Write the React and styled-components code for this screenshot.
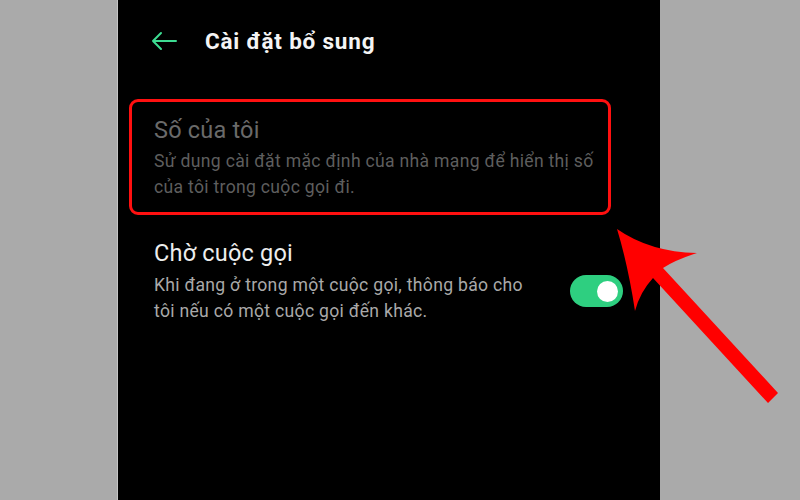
import React from "react";
import styled, { createGlobalStyle } from "styled-components";

const Global = createGlobalStyle`
  html, body { margin: 0; padding: 0; background: #aaaaaa; }
  body { font-family: Roboto, "Noto Sans", sans-serif; }
`;

const Page = styled.div`
  position: relative;
  width: 800px;
  height: 500px;
  display: flex;
  background: #aaaaaa;
  overflow: hidden;
`;

const Side = styled.div`
  width: ${(p) => p.$w}px;
  flex: ${(p) => (p.$grow ? 1 : "none")};
  background: #aaaaaa;
  border-right: ${(p) => (p.$edge ? "1px solid #c4c4c4" : "none")};
  box-sizing: border-box;
`;

const Screen = styled.div`
  width: 542px;
  height: 500px;
  background: #000;
  display: flex;
  flex-direction: column;
`;

const Header = styled.div`
  height: 82px;
  display: flex;
  align-items: center;
  padding-left: 33px;
  gap: 28px;
  box-sizing: border-box;
`;

const Title = styled.div`
  color: #f4f4f4;
  font-size: 22.5px;
  font-weight: 700;
  letter-spacing: 0.8px;
`;

const HighlightBox = styled.div`
  margin: 17px 0 0 11px;
  width: 482px;
  box-sizing: border-box;
  border: 3px solid #ff1010;
  border-radius: 9px;
  padding: 13px 0 12px 22px;
`;

const Item = styled.div`
  display: flex;
  align-items: center;
  padding: ${(p) => p.$pad || "0"};
`;

const Texts = styled.div`
  flex: 1;
  display: flex;
  flex-direction: column;
  gap: ${(p) => p.$gap}px;
`;

const ItemTitle = styled.div`
  font-size: 23.5px;
  line-height: 30px;
  letter-spacing: 0.2px;
  color: ${(p) => (p.$disabled ? "#6a6a6a" : "#ededed")};
`;

const ItemDesc = styled.div`
  font-size: 17.6px;
  line-height: 26px;
  letter-spacing: 0.3px;
  color: ${(p) => (p.$disabled ? "#5e5e5e" : "#a9a9a9")};
  max-width: ${(p) => p.$max}px;
`;

const Toggle = styled.div`
  width: 53px;
  height: 32px;
  border-radius: 16px;
  background: #2ecf80;
  display: flex;
  align-items: center;
  justify-content: flex-end;
  padding-right: 5px;
  box-sizing: border-box;
  margin-left: 20px;
  margin-top: 20px;
`;

const Knob = styled.div`
  width: 21px;
  height: 21px;
  border-radius: 50%;
  background: #ffffff;
`;

const Overlay = styled.svg`
  position: absolute;
  left: 0;
  top: 0;
  pointer-events: none;
`;

export default function App() {
  return (
    <>
      <Global />
      <Page>
        <Side $w={118} $edge />
        <Screen>
          <Header>
            <svg width="26" height="20" viewBox="0 0 26 20">
              <path
                d="M25 10 H2 M10 2 L2 10 L10 18"
                stroke="#3ddc92"
                strokeWidth="2"
                fill="none"
                strokeLinecap="round"
                strokeLinejoin="round"
              />
            </svg>
            <Title>Cài đặt bổ sung</Title>
          </Header>
          <HighlightBox>
            <Texts $gap={3}>
              <ItemTitle $disabled>Số của tôi</ItemTitle>
              <ItemDesc $disabled $max={455}>
                Sử dụng cài đặt mặc định của nhà mạng để hiển thị số của tôi trong cuộc gọi đi.
              </ItemDesc>
            </Texts>
          </HighlightBox>
          <Item $pad="23px 37px 0 36px">
            <Texts $gap={4}>
              <ItemTitle>Chờ cuộc gọi</ItemTitle>
              <ItemDesc $max={385}>
                Khi đang ở trong một cuộc gọi, thông báo cho tôi nếu có một cuộc gọi đến khác.
              </ItemDesc>
            </Texts>
            <Toggle>
              <Knob />
            </Toggle>
          </Item>
        </Screen>
        <Side $grow />
        <Overlay width="800" height="500" viewBox="0 0 800 500">
          <path
            d="M617,229 Q650,252 697,253 Q675,260 663,268 L778,393 L768,403 L653,278 Q640,292 635,311 Q628,265 617,229 Z"
            fill="#ff0000"
          />
        </Overlay>
      </Page>
    </>
  );
}
